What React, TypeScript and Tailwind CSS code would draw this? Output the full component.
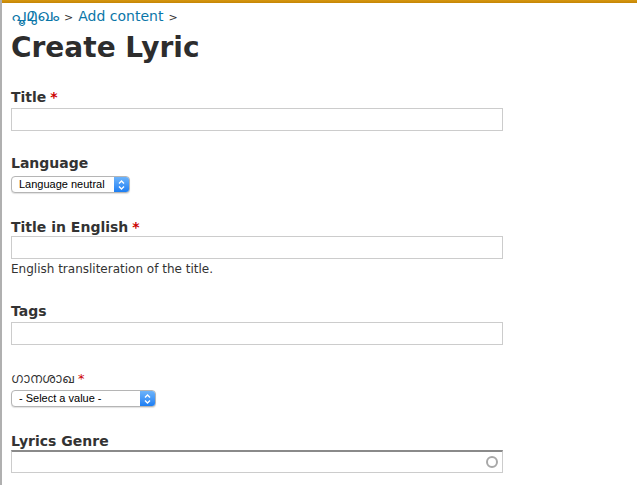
import React from "react";

function Required() {
  return <span className="text-[#cc0000] ml-1" title="This field is required.">*</span>;
}

function TextInput({ top = false, children }: { top?: boolean; children?: React.ReactNode }) {
  return (
    <div
      className={
        "relative w-[492px] h-[23px] bg-white border border-[#cccccc] " +
        (top ? "border-t-[#8a8a8a] border-t-2" : "")
      }
    >
      {children}
    </div>
  );
}

function MacSelect({ label, width }: { label: string; width: string }) {
  return (
    <div
      className={
        "flex items-center h-[17px] rounded-[4px] border border-[#b5b5b5] bg-white shadow-[0_1px_1px_rgba(0,0,0,0.12)] overflow-hidden " +
        width
      }
    >
      <span className="flex-1 pl-[7px] text-[11px] leading-none text-black font-['Liberation_Sans',sans-serif]">
        {label}
      </span>
      <span className="flex items-center justify-center w-[15px] h-full bg-gradient-to-b from-[#6cb3fa] to-[#1a7ef3]">
        <svg width="7" height="10" viewBox="0 0 7 10" fill="none" stroke="white" strokeWidth="1.4">
          <path d="M1 3.5 L3.5 1 L6 3.5" />
          <path d="M1 6.5 L3.5 9 L6 6.5" />
        </svg>
      </span>
    </div>
  );
}

export default function App() {
  return (
    <div className="w-[637px] h-[485px] bg-white overflow-hidden border-l-2 border-[#b0b0b0] font-['DejaVu_Sans',Verdana,sans-serif] text-[#333333]">
      <div className="h-[3px] bg-gradient-to-b from-[#d6970f] to-[#c58605]" />
      <div className="pl-[9px]">
        {/* Breadcrumb */}
        <div className="mt-[3px] text-[14px] leading-[18px] text-[#0a76a8]">
          <span className="text-[17px]">പൂമുഖം</span>
          <span className="text-[#333] text-[11px] mx-[5px]">&gt;</span>
          <span>Add content</span>
          <span className="text-[#333] text-[11px] ml-[5px]">&gt;</span>
        </div>

        <h1 className="mt-[5px] text-[28px] leading-[32px] font-bold text-[#2d2d2d]">Create Lyric</h1>

        <form className="mt-[24px]">
          {/* Title */}
          <div>
            <label className="block text-[14px] leading-[18px] font-bold mb-[2px]">
              Title<Required />
            </label>
            <TextInput />
          </div>

          {/* Language */}
          <div className="mt-[23px]">
            <label className="block text-[14px] leading-[18px] font-bold mb-[4px]">Language</label>
            <MacSelect label="Language neutral" width="w-[119px]" />
          </div>

          {/* Title in English */}
          <div className="mt-[25px]">
            <label className="block text-[14px] leading-[18px] font-bold">
              Title in English<Required />
            </label>
            <TextInput />
            <p className="mt-[2px] text-[12px] leading-[16px]">English transliteration of the title.</p>
          </div>

          {/* Tags */}
          <div className="mt-[25px]">
            <label className="block text-[14px] leading-[18px] font-bold mb-[2px]">Tags</label>
            <TextInput />
          </div>

          {/* Genre (Malayalam) */}
          <div className="mt-[27px]">
            <label className="block text-[13px] leading-[14px] mb-[4px]">
              ഗാനശാഖ<Required />
            </label>
            <MacSelect label="- Select a value -" width="w-[145px]" />
          </div>

          {/* Lyrics Genre */}
          <div className="mt-[25px]">
            <label className="block text-[14px] leading-[18px] font-bold">Lyrics Genre</label>
            <TextInput top>
              <span className="absolute right-[4px] top-[4px] w-[12px] h-[12px] rounded-full border-2 border-[#a8a8a8]" />
            </TextInput>
          </div>
        </form>
      </div>
    </div>
  );
}
